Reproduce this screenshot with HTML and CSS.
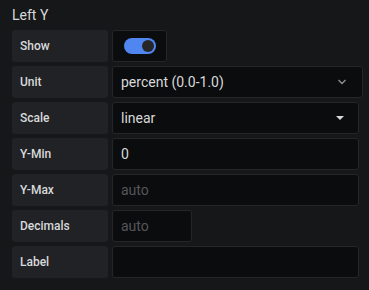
FILE: index.html
```html
<!DOCTYPE html>
<html>
<head>
  <title>Left Y</title>
  <meta name="viewport" content="width=device-width, initial-scale=1.0">
  <link rel="stylesheet" href="styles.css">
</head>
<body>
  <div class="section">
    <h5 class="section-heading">Left Y</h5>
    <div class="form-row">
      <label class="form-label">Show</label>
      <div class="switch-box">
        <span class="switch on"><span class="knob"></span></span>
      </div>
    </div>
    <div class="form-row">
      <label class="form-label">Unit</label>
      <div class="form-input unit-select">
        <span>percent (0.0-1.0)</span>
        <svg class="chevron" width="10" height="6" viewBox="0 0 10 6"><path d="M1.5 1l3.5 3.5L8.5 1" fill="none" stroke="#8e8e8e" stroke-width="1.4"/></svg>
      </div>
    </div>
    <div class="form-row">
      <label class="form-label">Scale</label>
      <div class="form-input">
        <span>linear</span>
        <span class="caret"></span>
      </div>
    </div>
    <div class="form-row">
      <label class="form-label">Y-Min</label>
      <div class="form-input"><span>0</span></div>
    </div>
    <div class="form-row">
      <label class="form-label">Y-Max</label>
      <div class="form-input"><span class="placeholder">auto</span></div>
    </div>
    <div class="form-row">
      <label class="form-label">Decimals</label>
      <div class="form-input small"><span class="placeholder">auto</span></div>
    </div>
    <div class="form-row">
      <label class="form-label">Label</label>
      <div class="form-input"></div>
    </div>
  </div>
</body>
</html>
```

FILE: styles.css
```css
body {
  margin: 0;
  background-color: #161719;
  font-family: Roboto, "Liberation Sans", sans-serif;
  color: #d8d9da;
}
.section {
  padding: 6px 0 0 12px;
}
.section-heading {
  margin: 0 0 6px 0;
  font-size: 14px;
  font-weight: 400;
  line-height: 18px;
  color: #d8d9da;
}
.form-row {
  display: flex;
  gap: 4px;
  height: 32px;
  margin-bottom: 4px;
}
.form-label {
  width: 96px;
  box-sizing: border-box;
  padding-left: 8px;
  display: flex;
  align-items: center;
  background-color: #202226;
  border-radius: 3px;
  font-size: 12px;
  font-weight: 500;
  color: #d8d9da;
}
.switch-box {
  width: 55px;
  box-sizing: border-box;
  background-color: #0b0c0e;
  border: 1px solid #262628;
  border-radius: 3px;
  display: flex;
  align-items: center;
  padding-left: 11px;
}
.switch {
  width: 32px;
  height: 16px;
  border-radius: 8px;
  background-color: #4f86f0;
  display: flex;
  align-items: center;
  justify-content: flex-end;
  padding: 0 2px;
  box-sizing: border-box;
}
.knob {
  width: 12px;
  height: 12px;
  border-radius: 50%;
  background-color: #262628;
}
.form-input {
  width: 247px;
  box-sizing: border-box;
  background-color: #0b0c0e;
  border: 1px solid #262628;
  border-radius: 3px;
  display: flex;
  align-items: center;
  justify-content: space-between;
  padding: 0 13px 0 8px;
  font-size: 14px;
  color: #d8d9da;
}
.unit-select {
  width: 251px;
}
.form-input.small {
  width: 80px;
}
.placeholder {
  color: #555659;
}
.caret {
  width: 0;
  height: 0;
  border-left: 4px solid transparent;
  border-right: 4px solid transparent;
  border-top: 4px solid #d8d9da;
  margin-right: 1px;
}
.chevron {
  margin-right: 2px;
}
```
